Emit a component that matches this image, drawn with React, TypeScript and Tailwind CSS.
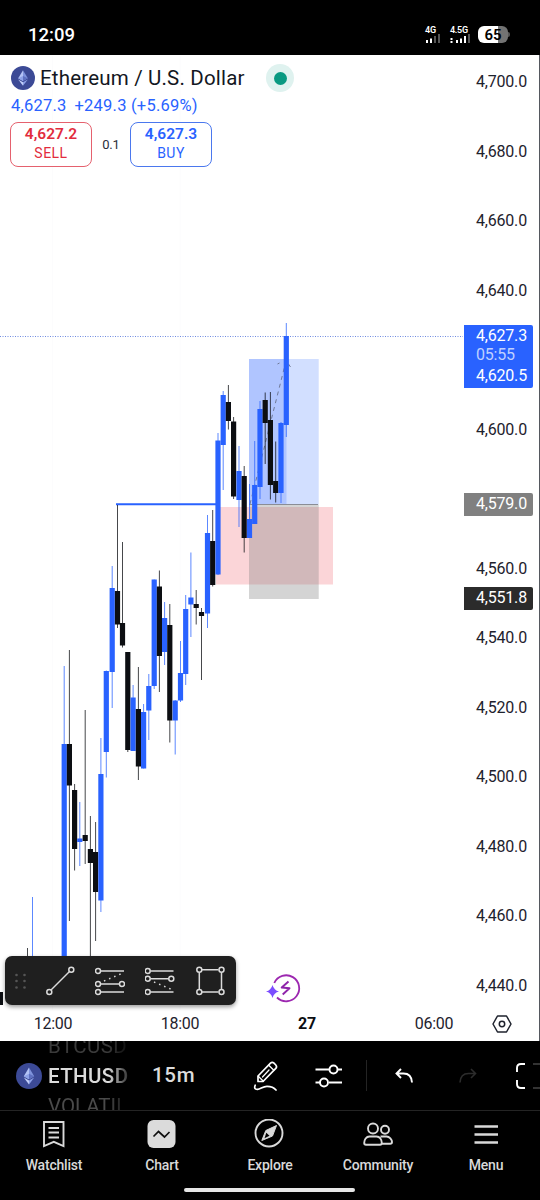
import type { ReactNode } from "react";

type Candle = {
  x: number;
  high: number;
  low: number;
  top: number;
  bottom: number;
  up?: boolean;
};

// pixel positions inside the chart pane (pane starts below the status bar)
const candles: Candle[] = [
  { x: 27.5, high: 948, low: 990, top: 962, bottom: 980 },
  { x: 32.5, high: 897, low: 990, top: 962, bottom: 980, up: true },
  { x: 64.2, high: 666, low: 980, top: 744, bottom: 980, up: true },
  { x: 69.4, high: 650, low: 921, top: 744, bottom: 785.5 },
  { x: 74.6, high: 784, low: 870.5, top: 790, bottom: 849 },
  { x: 79.8, high: 802, low: 866, top: 838.5, bottom: 842, up: true },
  { x: 85.2, high: 710, low: 864, top: 835, bottom: 841 },
  { x: 90.4, high: 816, low: 980, top: 849, bottom: 863 },
  { x: 95.6, high: 822, low: 941, top: 852, bottom: 892 },
  { x: 100.9, high: 738, low: 912, top: 774, bottom: 900.5, up: true },
  { x: 106.3, high: 670.5, low: 777.5, top: 671, bottom: 752, up: true },
  { x: 112.2, high: 566, low: 708, top: 588, bottom: 672, up: true },
  { x: 117.5, high: 505, low: 628, top: 591, bottom: 624.5 },
  { x: 122.5, high: 542, low: 647.5, top: 623, bottom: 645.5 },
  { x: 127.8, high: 652, low: 752, top: 652, bottom: 750 },
  { x: 133.1, high: 685, low: 751, top: 697.5, bottom: 751, up: true },
  { x: 138.4, high: 667, low: 780, top: 709, bottom: 766.5 },
  { x: 143.6, high: 704, low: 768.5, top: 712, bottom: 768.5, up: true },
  { x: 148.8, high: 674, low: 740, top: 686, bottom: 710.5, up: true },
  { x: 154.2, high: 579.5, low: 689, top: 579.5, bottom: 686, up: true },
  { x: 159.4, high: 570.5, low: 692, top: 586.5, bottom: 656 },
  { x: 164.6, high: 602, low: 665, top: 618, bottom: 652, up: true },
  { x: 169.8, high: 604, low: 742.5, top: 625, bottom: 720.5 },
  { x: 175.2, high: 700, low: 754.5, top: 700.5, bottom: 720.5, up: true },
  { x: 180.5, high: 641, low: 702, top: 673, bottom: 700.5, up: true },
  { x: 185.7, high: 595, low: 685, top: 609, bottom: 674, up: true },
  { x: 190.9, high: 552.5, low: 637, top: 597.5, bottom: 604.5, up: true },
  { x: 196.2, high: 590, low: 624.5, top: 604, bottom: 608 },
  { x: 201.5, high: 608, low: 680, top: 612, bottom: 616 },
  { x: 207.5, high: 515, low: 628, top: 533, bottom: 613.5, up: true },
  { x: 212.7, high: 510, low: 586.5, top: 541, bottom: 585 },
  { x: 218, high: 433, low: 575, top: 440.5, bottom: 574.5, up: true },
  { x: 223.2, high: 391, low: 490, top: 395, bottom: 445, up: true },
  { x: 228.4, high: 385, low: 429.5, top: 402, bottom: 421 },
  { x: 233.6, high: 417, low: 499, top: 421.5, bottom: 496.5 },
  { x: 239, high: 446, low: 527, top: 471, bottom: 500, up: true },
  { x: 244.2, high: 466, low: 552.5, top: 476, bottom: 538 },
  { x: 249.5, high: 484, low: 538, top: 519, bottom: 538, up: true },
  { x: 254.7, high: 441, low: 524, top: 485, bottom: 524, up: true },
  { x: 260, high: 401, low: 499, top: 409, bottom: 487, up: true },
  { x: 265.2, high: 392.5, low: 464, top: 400, bottom: 423 },
  { x: 270.4, high: 392, low: 499.5, top: 420, bottom: 485 },
  { x: 275.7, high: 441.5, low: 502.5, top: 481, bottom: 493 },
  { x: 281, high: 422, low: 503, top: 423, bottom: 493, up: true },
  { x: 286.3, high: 323, low: 437, top: 336, bottom: 425, up: true },
];

const prices = [
  "4,700.0", "4,680.0", "4,660.0", "4,640.0", "", "4,600.0", "",
  "4,560.0", "4,540.0", "4,520.0", "4,500.0", "4,480.0", "4,460.0", "4,440.0",
];

function EthLogo({ size }: { size: number }) {
  return (
    <svg width={size} height={size} viewBox="0 0 24 24" className="shrink-0">
      <circle cx="12" cy="12" r="12" fill="#3c4a96" />
      <path d="M12 4.2 7.2 12.2 12 15z" fill="#b4c3f5" />
      <path d="M12 4.2 16.8 12.2 12 15z" fill="#7f93dc" />
      <path d="M7.2 12.2 12 10v5z" fill="#8ea2e8" />
      <path d="M16.8 12.2 12 10v5z" fill="#5e70c0" />
      <path d="M7.2 13.4 12 19.8v-3.6z" fill="#c3d0fa" />
      <path d="M16.8 13.4 12 19.8v-3.6z" fill="#8ea2e8" />
    </svg>
  );
}

function StatusBar() {
  return (
    <header className="flex h-[55px] shrink-0 items-end justify-between pb-[10px] pl-7 pr-[30px] text-white">
      <span className="text-[18.500px] font-medium leading-5">12:09</span>
      <div className="flex h-[19px] items-start">
        <div className="flex w-[25px] flex-col">
          <span className="text-[9px] font-semibold leading-[8px] tracking-[-0.2px]">4G</span>
          <svg width="16" height="10" viewBox="0 0 16 10">
            <path d="M1 6h2v3H1zM5 4.500h2V9H5z" fill="#fff" />
            <path d="M9 2h2v7H9zM13 0h2v9h-2z" fill="#555" />
          </svg>
        </div>
        <div className="flex w-[28px] flex-col">
          <span className="text-[9px] font-semibold leading-[8px] tracking-[-0.3px]">4.5G</span>
          <svg width="21" height="10" viewBox="0 0 21 10">
            <path d="M.5 4h2v2h-2zM.5 7h2v2h-2zM6 6h2v3H6zM10 4.500h2V9h-2zM14 2h2v7h-2z" fill="#fff" />
            <path d="M18 0h2v9h-2z" fill="#555" />
          </svg>
        </div>
        <div className="flex items-center">
          <div className="flex h-[17px] w-[30px] items-center justify-center rounded-[6px] bg-linear-to-r from-white from-65% to-[#737373] to-65% pt-px text-[15px] font-semibold leading-none text-black">
            65
          </div>
          <div className="h-[5px] w-[2px] rounded-r-full bg-[#555]" />
        </div>
      </div>
    </header>
  );
}

function ChartDrawing() {
  return (
    <svg className="absolute inset-0" width="540" height="986" viewBox="0 55 540 986">
      <path d="M52.500 56V1010M180 56V1010" stroke="#fcfcfd" />
      <rect x="216" y="507" width="117" height="77.500" fill="#fbd5d8" />
      <rect x="249" y="359" width="69.700" height="145.500" fill="#d2dfff" />
      <rect x="249" y="359" width="37.500" height="145.500" fill="#b0c5ff" />
      <rect x="249" y="504.500" width="69.700" height="94.500" fill="#808080" fillOpacity="0.34" />
      <path d="M249 504.500H318" stroke="#8a8d96" />
      <path d="M0 336.500H463" stroke="#6f8be0" strokeDasharray="1 1.500" />
      <path d="M250 504 285.500 363" stroke="#68718c" strokeWidth="0.900" strokeDasharray="4 4" />
      <path d="m277.500 364 2-1M288.500 364l2 3" stroke="#68718c" strokeWidth="0.900" />
      <path d="M116 504.300H216" stroke="#2962ff" strokeWidth="2" />
      {candles.map((c) => (
        <g key={c.x}>
          <path
            d={`M${c.x} ${c.high}V${c.low}`}
            stroke={c.up ? "#2962ff" : "#0c0e12"}
            strokeOpacity={0.85}
            strokeWidth="0.9"
          />
          <rect
            x={c.x - 2.6}
            y={c.top}
            width="5.200"
            height={c.bottom - c.top}
            fill={c.up ? "#2962ff" : "#0c0e12"}
          />
        </g>
      ))}
      <path d="M0 992h3v13H0z" fill="#0c0e12" />
    </svg>
  );
}

function Legend() {
  return (
    <div className="relative pl-[11px] pt-[9px]">
      <div className="flex h-[28px] items-center">
        <EthLogo size={24} />
        <h1 className="ml-[5px] w-[213px] whitespace-nowrap text-[20.500px] leading-7 tracking-[0.180px] text-[#131722]">
          Ethereum / U.S. Dollar
        </h1>
        <span className="ml-[13px] flex size-[28px] items-center justify-center rounded-full bg-[#dff2ef]">
          <span className="size-[13px] rounded-full bg-[#089981]" />
        </span>
      </div>
      <div className="mt-[4px] flex h-5 items-center gap-[8px] pt-px text-[16.500px] tracking-[0.220px] text-[#2962ff]">
        <span>4,627.3</span>
        <span>+249.3 (+5.69%)</span>
      </div>
      <div className="-ml-px mt-[6px] flex items-center">
        <QuoteButton price="4,627.2" label="SELL" className="border-[#e5616e] text-[#e22c3d]" />
        <span className="w-[38px] text-center text-[13px] tracking-[-0.2px] text-[#2a2e39]">0.1</span>
        <QuoteButton price="4,627.3" label="BUY" className="border-[#4b78ee] text-[#2962ff]" />
      </div>
    </div>
  );
}

function QuoteButton({ price, label, className }: { price: string; label: string; className: string }) {
  return (
    <button
      className={`flex h-[45px] w-[82px] flex-col items-center justify-center rounded-[8px] border bg-white pb-px ${className}`}
    >
      <span className="text-[15.500px] font-semibold leading-[19px]">{price}</span>
      <span className="text-[14px] leading-[19px] tracking-[0.5px]">{label}</span>
    </button>
  );
}

function PriceScale() {
  return (
    <div className="absolute right-0 top-0 h-full w-[76px] border-r border-[#55585f] text-[16px] tracking-[-0.2px] text-[#1e222d]">
      <div className="flex flex-col pt-[17px]">
        {prices.map((price, i) => (
          <div key={i} className="h-[69.540px] pl-[12px] leading-5">
            {price}
          </div>
        ))}
      </div>
      <div className="absolute left-0 top-[270px] flex h-[63px] w-[69px] flex-col rounded-r-[2px] bg-[#2962ff] pl-[12px] pt-px text-white">
        <span className="leading-[20px]">4,627.3</span>
        <span className="leading-[17px] tracking-[-0.2px] text-[#bfd0ff]">05:55</span>
        <span className="mt-[2px] leading-[21px]">4,620.5</span>
      </div>
      <div className="absolute left-0 top-[438px] h-[23px] w-[69px] rounded-r-[2px] bg-[#808080] pl-[12px] leading-[22px] text-white">
        4,579.0
      </div>
      <div className="absolute left-0 top-[532px] h-[23px] w-[69px] rounded-r-[2px] bg-[#2b2b2b] pl-[12px] leading-[22px] text-white">
        4,551.8
      </div>
    </div>
  );
}

function DrawingToolbar() {
  return (
    <div className="absolute left-[5px] top-[901px] flex h-[49px] w-[231px] items-center rounded-[7px] bg-[#1f1f1f] pl-[9px] shadow-[0_2px_4px_rgba(0,0,0,0.4)]">
      <svg width="14" height="18" viewBox="0 0 14 18" fill="#555">
        <circle cx="2.500" cy="3" r="1.300" />
        <circle cx="10.500" cy="3" r="1.300" />
        <circle cx="2.500" cy="9" r="1.300" />
        <circle cx="10.500" cy="9" r="1.300" />
        <circle cx="2.500" cy="15.500" r="1.300" />
        <circle cx="10.500" cy="15.500" r="1.300" />
      </svg>
      <div className="ml-[17px] flex gap-[20px]">
        <ToolIcon>
          <path d="m6 24 18.500-18.500" />
          <circle cx="4.300" cy="26" r="2.500" />
          <circle cx="26.300" cy="3.700" r="2.500" />
        </ToolIcon>
        <ToolIcon>
          <path d="M5.500 5H29M5.500 18H24M5.500 26H29" />
          <path d="M9 15 28 7" strokeDasharray="1.500 4" />
          <circle cx="3" cy="5" r="2.500" />
          <circle cx="3" cy="18" r="2.500" />
          <circle cx="27" cy="18" r="2.500" />
          <circle cx="3" cy="26" r="2.500" />
        </ToolIcon>
        <ToolIcon>
          <path d="M5.500 5H28.500M5.500 12.700H24M5.500 26H28.500" />
          <path d="m9 16 19 8" strokeDasharray="1.500 4" />
          <circle cx="2.700" cy="5" r="2.500" />
          <circle cx="2.700" cy="12.700" r="2.500" />
          <circle cx="26.300" cy="12.700" r="2.500" />
          <circle cx="2.700" cy="26" r="2.500" />
        </ToolIcon>
        <ToolIcon>
          <path d="M7 3.700H23.500M7 26H23.500M4.300 6.200V23.500M26.500 6.200V23.500" />
          <circle cx="4.300" cy="3.700" r="2.500" />
          <circle cx="26.500" cy="3.700" r="2.500" />
          <circle cx="4.300" cy="26" r="2.500" />
          <circle cx="26.500" cy="26" r="2.500" />
        </ToolIcon>
      </div>
    </div>
  );
}

function ToolIcon({ children }: { children: ReactNode }) {
  return (
    <svg width="30" height="30" viewBox="0 0 30 30" fill="none" stroke="#dbdbdb" strokeWidth="1.500">
      {children}
    </svg>
  );
}

function TimeScale() {
  return (
    <div className="absolute bottom-0 left-0 flex h-[35px] w-full items-center text-[16px] tracking-[-0.3px] text-[#1e222d]">
      <span className="ml-[14px] w-[78px] text-center">12:00</span>
      <span className="ml-[49px] w-[78px] text-center">18:00</span>
      <span className="ml-[49px] w-[78px] text-center font-bold text-[#0c0e12]">27</span>
      <span className="ml-[49px] w-[78px] text-center">06:00</span>
      <svg className="ml-[19px]" width="20" height="20" viewBox="0 0 20 20" fill="none" stroke="#1e222d" strokeWidth="1.500">
        <path d="M5.500 2h9L19 10l-4.500 8h-9L1 10z" strokeLinejoin="round" />
        <circle cx="10" cy="10" r="2.700" />
      </svg>
    </div>
  );
}

function SymbolBar() {
  return (
    <div className="flex h-[70px] shrink-0 items-center overflow-hidden border-b border-[#242424] text-[#dcdcdc]">
      <div className="flex items-center pl-[16px]">
        <EthLogo size={26} />
        <div className="ml-[6px] w-[86px] whitespace-nowrap text-[20.500px] font-medium leading-[30px] tracking-[0.4px] mask-r-from-70% mask-r-to-100%">
          <p className="font-normal text-[#3a3a3a]">BTCUSD</p>
          <p>ETHUSD</p>
          <p className="font-normal tracking-normal text-[#4a4a4a]">VOLATIL</p>
        </div>
      </div>
      <span className="ml-[18px] w-[50px] text-[20.500px] font-medium tracking-[0.7px]">15m</span>
      <svg className="ml-[50px]" width="28" height="32" viewBox="0 0 28 32" fill="none" stroke="#fff" strokeWidth="1.700" strokeLinecap="round" strokeLinejoin="round">
        <path d="M6 16 18.500 3.200q1.700-1.600 3.500 0l1.800 1.800q1.500 1.700 0 3.400L11 21.500H6z" />
        <path d="m16.800 5.200 5 5M6.300 16.200l5 5M10.500 17l6.500-7" strokeWidth="1.300" />
        <path d="M3.200 25.200Q1.500 29.500 5.500 29.300C8.500 29 11 26.300 15 26.300c3.500 0 6.500.5 9 3.700" />
      </svg>
      <svg className="ml-[35px]" width="28" height="24" viewBox="0 0 28 24" fill="none" stroke="#fff" strokeWidth="1.900">
        <path d="M.5 5.500H14M23 5.500h4M.5 18.500H5M14 18.500h13" />
        <circle cx="18.500" cy="5.500" r="4" />
        <circle cx="9" cy="18.500" r="4" />
      </svg>
      <div className="ml-[23px] h-[31px] w-px bg-[#242424]" />
      <svg className="ml-[28px]" width="18" height="16" viewBox="0 0 18 16" fill="none" stroke="#fff" strokeWidth="1.900">
        <path d="M6 1 1.500 5.500 6 10M2 5.500h6.500q8 0 8.500 9" />
      </svg>
      <svg className="ml-[46px]" width="18" height="16" viewBox="0 0 18 16" fill="none" stroke="#2c2c2c" strokeWidth="1.600">
        <path d="m12 1 4.500 4.500L12 10M16 5.500H9.500Q1.500 5.500 1 14.500" />
      </svg>
      <svg className="ml-[38px] shrink-0" width="25" height="28" viewBox="0 0 25 28" fill="none" strokeWidth="1.900">
        <path d="M10 2H6Q2 2 2 6v4M2 18v4q0 4 4 4h4" stroke="#fff" />
        <path d="M18 2h7M18 26h7" stroke="#333" />
      </svg>
    </div>
  );
}

function NavItem({ label, children }: { label: string; children: ReactNode }) {
  return (
    <a className="flex w-[108px] flex-col items-center">
      <svg width="32" height="32" viewBox="0 0 32 32" fill="none" stroke="#d9d9d9" strokeWidth="1.900">
        {children}
      </svg>
      <span className="mt-[6px] text-[14px] font-medium leading-4 tracking-[-0.200px]">{label}</span>
    </a>
  );
}

function BottomNav() {
  return (
    <nav className="relative flex h-[89px] shrink-0 pt-[8px] text-[#d9d9d9]">
      <NavItem label="Watchlist">
        <path d="M6 3h19.500v24l-9.700-4.200L6 27zM10.500 9h10.500M10.500 13.500h10.500M10.500 18.500h10.500" />
      </NavItem>
      <NavItem label="Chart">
        <rect x="1.500" y="1" width="28" height="28" rx="6" fill="#dbdbdb" stroke="none" />
        <path d="m7.500 17.500 5-5 6 5.500 5-5" stroke="#0f0f0f" strokeWidth="1.700" />
      </NavItem>
      <NavItem label="Explore">
        <circle cx="15" cy="14" r="13.500" />
        <path d="M7.800 21.500 11.800 11.500 22.500 6.500 18.500 17z" fill="#d9d9d9" strokeWidth="1" strokeLinejoin="round" />
        <path d="m12.300 13.800 3.200 3-5 2.500z" fill="#000" stroke="none" />
      </NavItem>
      <NavItem label="Community">
        <circle cx="11" cy="9.500" r="5" />
        <circle cx="23" cy="10.700" r="4" />
        <path d="M7.500 17.500h7c3.300 0 5.300 3.300 5.300 6.500 0 1-.8 1.700-1.800 1.700H4c-1 0-1.800-.7-1.800-1.700 0-3.200 2-6.500 5.300-6.500zM18.500 17.500h6c3 0 5.500 3 5.500 5.500 0 1-.8 1.700-1.800 1.700H20" />
      </NavItem>
      <NavItem label="Menu">
        <path d="M4.500 7.500H28M4.500 15.500H28M4.500 23.500H28" strokeWidth="2.400" />
      </NavItem>
      <div className="absolute bottom-[8px] left-[184px] h-[4px] w-[171px] rounded-full bg-[#e6e6e6]" />
    </nav>
  );
}

export default function App() {
  return (
    <div className="flex h-[1200px] w-[540px] flex-col overflow-hidden bg-black font-[Roboto,sans-serif]">
      <StatusBar />
      <main className="relative h-[986px] shrink-0 overflow-hidden bg-white">
        <ChartDrawing />
        <Legend />
        <PriceScale />
        <DrawingToolbar />
        {/* quick action badge */}
        <svg className="absolute left-[265px] top-[917px]" width="37" height="32" viewBox="0 0 37 32" fill="none">
          <path d="M9.300 11A13 13 0 1 1 12 25.500" stroke="#9c27b0" strokeWidth="1.800" />
          <path d="m23.500 9.500-6.800 6 7.800.8-6.800 6.200" stroke="#8e24aa" strokeWidth="1.900" strokeLinejoin="round" />
          <path d="M7.500 13q1.500 5.300 6.500 6.500-5 1.200-6.500 6.500Q6 20.700 1 19.500 6 18.300 7.500 13z" fill="#7c4dff" />
        </svg>
        <TimeScale />
      </main>
      <SymbolBar />
      <BottomNav />
    </div>
  );
}
